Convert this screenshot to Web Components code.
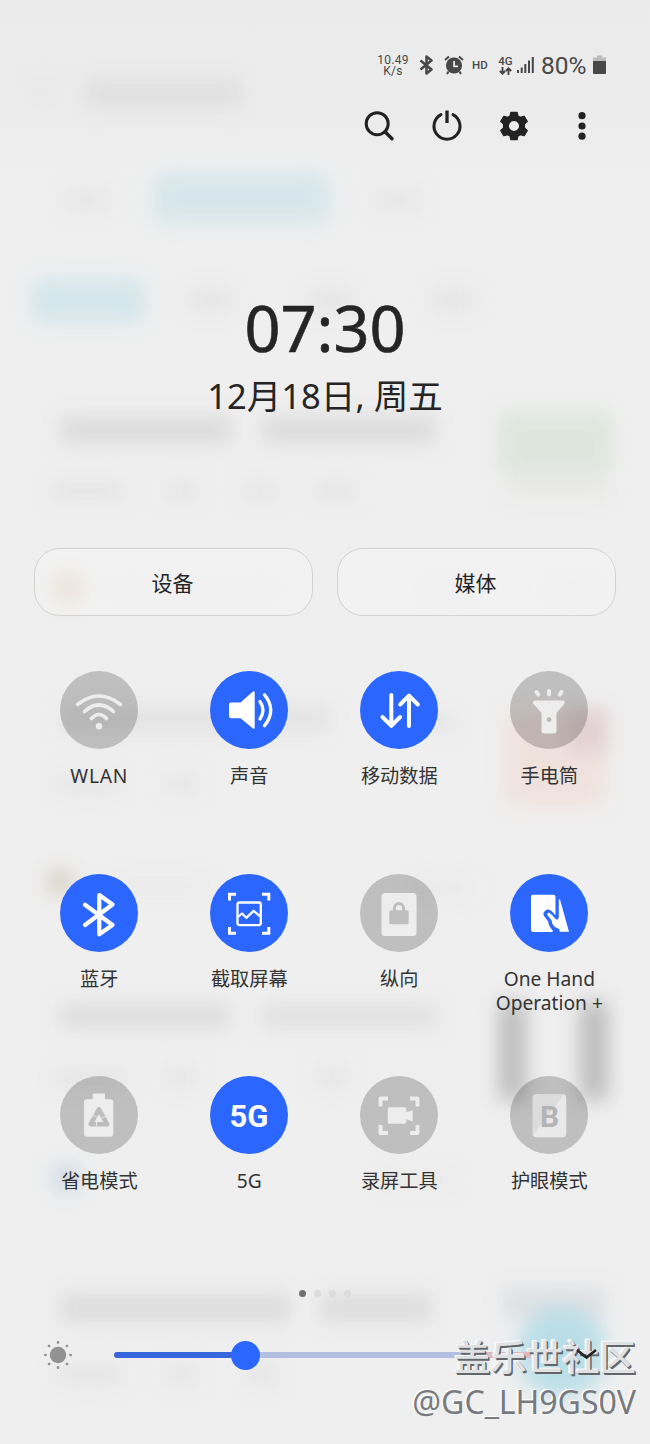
<!DOCTYPE html>
<html lang="zh-CN">
<head>
<meta charset="utf-8">
<title>Quick Panel</title>
<style>
  body {
    margin: 0;
    background: #efefef;
    color: #252525;
    font-family: "Noto Sans", "Noto Sans CJK SC", sans-serif;
  }
</style>
</head>
<body>
<quick-panel></quick-panel>

<script>
// helper: every element clones its own template into an open root
function define(name, html, setup) {
  const template = document.createElement('template');
  template.innerHTML = html;
  customElements.define(name, class extends HTMLElement {
    connectedCallback() {
      if (this.shadowRoot) return;
      this.attachShadow({ mode: 'open' }).appendChild(template.content.cloneNode(true));
      if (setup) setup(this, this.shadowRoot);
    }
  });
}

const ICONS = {
  wifi: `<g fill="none" stroke="currentColor" stroke-width="3.6" stroke-linecap="round">
    <path d="M17.5 33.5Q39 16.500 60.500 33.500M24.500 40.500Q39 27.500 53.500 40.500M31.500 47.500Q39 39.500 46.500 47.500"/></g>
    <circle cx="39" cy="55.300" r="3.300" fill="currentColor"/>`,
  sound: `<path fill="currentColor" d="M21 31.500h9.500L43 20.600q1.700-1 1.700 1v35q0 2-1.700 1L30.500 47.200H21q-2 0-2-2V33.500q0-2 2-2z"/>
    <path fill="none" stroke="currentColor" stroke-width="3.300" stroke-linecap="round" d="M50 30.500q6 8.500 0 17.500M54.500 23.800q12.500 15.500 0 31"/>`,
  data: `<path fill="none" stroke="currentColor" stroke-width="4" stroke-linecap="round" stroke-linejoin="round" d="M31.300 24v30M22.500 46l8.800 8.800 8.800-8.800M49 55V25M40.200 33.500l8.800-8.800 8.800 8.800"/>`,
  torch: `<path fill="currentColor" fill-rule="evenodd" d="M24.500 29.500h28.500q1.500 0 1.500 1.500v1.500L46.500 42v17.500q0 3-3 3h-9q-3 0-3-3V42L23 32.500V31q0-1.500 1.500-1.500zM39 46.200a2.400 2.400 0 1 0 .01 0z"/>
    <path stroke="currentColor" stroke-width="4" stroke-linecap="round" d="M26.500 21l1.800 2.600M39 20v3.500M51.500 21l-1.800 2.600"/>`,
  bluetooth: `<path fill="none" stroke="currentColor" stroke-width="4.200" stroke-linecap="round" stroke-linejoin="round" d="M25 30.700L52.500 51 39.300 60.200V21L52.500 30.500 25 51"/>`,
  capture: `<g fill="none" stroke="currentColor"><path stroke-width="3" d="M26 20.200h-6.500v6.300M52 20.200h6.800v6.300M26 59.200h-6.500v-6.300M52 59.200h6.800v-6.300"/>
    <rect x="27.500" y="28.500" width="23.300" height="22.600" rx="2" stroke-width="2.300"/>
    <path stroke-width="2.300" stroke-linejoin="round" d="M28 43l4-3.500 4.300 4.300 7.300-7 7.200 6"/></g>`,
  portrait: `<path fill="currentColor" fill-rule="evenodd" d="M25 19h28q3.500 0 3.500 3.500v36q0 3.500-3.500 3.500H25q-3.500 0-3.500-3.500v-36Q21.500 19 25 19z
    M33 36.300h-2q-1.700 0-1.700 1.700v10.700q0 1.600 1.700 1.600h16q1.700 0 1.700-1.600V38q0-1.700-1.700-1.700h-2V34a6 6 0 0 0-12 0zM36 36.300V34a3 3 0 0 1 6 0v2.300z"/>`,
  onehand: `<path fill="currentColor" d="M23 20.800h20.500q2 0 2 2v18.500l-3.500-3.800q-4-3.500-7-.5-3 2.500-.3 6l3.500 4.500q.6 5 4.500 9v1.500H23q-2 0-2-2V22.800q0-2 2-2z"/>
    <path fill="currentColor" d="M48.800 25.500q1-.8 1.500 1l8.700 31.300h-9.500v-2.500l-5-2.500q-2.500-2-3-6.500l-4-5q-1-2.500 1.500-2.500 1 0 2.500 1.600l4.800 5.200h1.500q1-1 1-3z"/>`,
  saver: `<path fill="currentColor" d="M32.700 17.500h12.300v5.800h5.300q3 0 3 3v31.500q0 3-3 3H27q-3 0-3-3V26.300q0-3 3-3h5.700z"/>
    <path fill="none" stroke="#bdbdbd" stroke-width="4.600" stroke-linejoin="round" d="M38.900 33.300L47.200 48.300H30.600z"/>
    <path stroke="#e5e5e5" stroke-width="1" d="M36.500 45.500v5.500M32 38.500l4.500 2.300M45.800 40.300l-4.200 1.700"/>`,
  fiveg: `<text x="39" y="51" text-anchor="middle" font-family="Roboto, sans-serif" font-weight="700" font-size="31" fill="currentColor">5G</text>`,
  record: `<path fill="none" stroke="currentColor" stroke-width="3.900" stroke-linejoin="round" d="M28 22.500h-7.500v8M50 22.500h7.500v8M28 57h-7.500v-8M50 57h7.500v-8"/>
    <path fill="currentColor" d="M29.500 31.300h15q1.800 0 1.800 1.800v3.200l6.400-2v11.200l-6.400-2.300v2.700q0 1.800-1.800 1.800h-15q-1.800 0-1.800-1.800V33.100q0-1.800 1.800-1.800z"/>`,
  eye: `<rect x="22.500" y="18" width="33.700" height="43.300" rx="4" fill="#dcdcdc"/>
    <path fill="#e9e9e9" d="M54 18.500q2.200 1 2.200 3.500v35.300q0 4-4 4H26.500q-2.500 0-3.500-1.800z"/>
    <text x="39.700" y="50.500" text-anchor="middle" font-family="Roboto, sans-serif" font-weight="700" font-size="30" fill="#b4b4b4">B</text>`
};

// blurred page showing through the panel
define('panel-backdrop', `
  <style>
    :host { position: absolute; inset: 0; z-index: -1; overflow: hidden; }
    svg { display: block; }
  </style>
  <svg width="650" height="1444" viewBox="0 0 650 1444">
    <defs>
      <filter id="soft" x="-100" y="-100" width="850" height="1644" filterUnits="userSpaceOnUse" color-interpolation-filters="sRGB"><feGaussianBlur stdDeviation="10"/></filter>
      <linearGradient id="shade" x2="0" y2="1"><stop offset="0" stop-color="#ebebeb"/><stop offset=".09" stop-color="#ececec"/><stop offset=".12" stop-color="#efefef"/><stop offset="1" stop-color="#efefef"/></linearGradient>
    </defs>
    <rect width="650" height="1444" fill="url(#shade)"/>
    <g filter="url(#soft)" opacity=".9">
      <rect x="86" y="80" width="155" height="28" fill="#dedede"/>
      <rect x="32" y="80" width="24" height="26" fill="#e7e7e7"/>
      <rect x="152" y="172" width="178" height="52" rx="14" fill="#d4e6ec"/>
      <rect x="62" y="189" width="48" height="22" fill="#e6e6e6"/>
      <rect x="372" y="189" width="50" height="22" fill="#e6e6e6"/>
      <rect x="30" y="278" width="116" height="46" rx="14" fill="#d2e6ec"/>
      <g fill="#e5e5e5">
        <rect x="186" y="288" width="48" height="24"/><rect x="306" y="288" width="48" height="24"/><rect x="430" y="288" width="46" height="24"/>
        <rect x="50" y="480" width="75" height="22"/><rect x="164" y="480" width="34" height="22"/><rect x="242" y="480" width="36" height="22"/><rect x="314" y="480" width="42" height="22"/>
        <rect x="110" y="580" width="170" height="18" fill="#ebebeb"/><rect x="420" y="580" width="60" height="18" fill="#e9e9e9"/><rect x="545" y="580" width="55" height="18" fill="#e9e9e9"/>
        <rect x="55" y="774" width="66" height="20"/><rect x="164" y="774" width="34" height="20"/>
        <rect x="110" y="878" width="100" height="16" fill="#e9e9e9"/><rect x="410" y="880" width="68" height="16" fill="#e9e9e9"/>
        <rect x="55" y="1068" width="72" height="20"/><rect x="164" y="1068" width="34" height="20"/><rect x="314" y="1068" width="36" height="20"/>
        <rect x="380" y="1172" width="80" height="16" fill="#e9e9e9"/>
        <rect x="55" y="1364" width="68" height="22"/><rect x="164" y="1364" width="34" height="22"/><rect x="245" y="1364" width="34" height="22"/>
      </g>
      <g fill="#dadada">
        <rect x="60" y="416" width="172" height="28"/><rect x="262" y="416" width="174" height="28"/>
        <rect x="60" y="706" width="270" height="26" fill="#e2e2e2"/><rect x="425" y="712" width="30" height="20" fill="#e4e4e4"/>
        <rect x="60" y="1003" width="170" height="26" fill="#dcdcdc"/><rect x="262" y="1003" width="174" height="26" fill="#dfdfdf"/>
        <rect x="60" y="1294" width="230" height="28"/><rect x="320" y="1294" width="112" height="28"/>
      </g>
      <rect x="498" y="412" width="114" height="58" fill="#dce5dc"/>
      <rect x="504" y="470" width="106" height="28" fill="#e8e8e6"/>
      <circle cx="68" cy="588" r="15" fill="#e4d5c6"/>
      <rect x="505" y="710" width="100" height="96" fill="#f0e1dc"/>
      <rect x="570" y="708" width="38" height="45" fill="#e2cdd0"/>
      <circle cx="60" cy="882" r="12" fill="#cfc5b8"/>
      <rect x="499" y="1002" width="27" height="98" fill="#b6b6b6"/>
      <rect x="580" y="1002" width="28" height="98" fill="#b6b6b6"/>
      <circle cx="66" cy="1178" r="16" fill="#cfdae6"/>
      <rect x="502" y="1288" width="104" height="30" fill="#dcdee1"/>
      <circle cx="562" cy="1352" r="45" fill="#b5dde8"/>
    </g>
  </svg>
`);

define('status-bar', `
  <style>
    :host { display: flex; align-items: center; justify-content: flex-end; height: 36px; margin-top: 47px; padding-right: 44px; color: #484848; font-family: Roboto, sans-serif; }
    .speed { display: grid; justify-items: center; width: 36px; font-size: 12px; line-height: 11.500px; letter-spacing: .3px; margin: 2px 8px 0 0; }
    .hd { font-size: 11.500px; font-weight: 500; margin: 0 9px 0 8px; width: 17px; }
    .net { display: grid; justify-items: center; width: 15px; margin-right: 3px; font-size: 11.500px; font-weight: 500; line-height: 11px; }
    .charge { font-size: 24.500px; line-height: 36px; width: 49px; margin: 2px 3px 0 6px; }
    svg { display: block; flex: none; }
  </style>
  <div class="speed"><span>10.49</span><span>K/s</span></div>
  <svg width="15" height="20" viewBox="0 0 15 20" fill="none" stroke="currentColor" stroke-width="2.500" stroke-linejoin="round"><path d="M1.500 5.500l11 9-5 4V1.500l5 4-11 9"/></svg>
  <svg width="20" height="20" viewBox="0 0 20 20" style="margin-left:10px"><path fill="currentColor" fill-rule="evenodd" d="M10 2.500a8 8 0 1 0 .01 0zM9.200 6h1.800v4.500h3v1.700H9.200z"/><path stroke="currentColor" stroke-width="2" d="M1 5l4-3.500M19 5l-4-3.500M4.500 16.500L3 19M15.500 16.500L17 19"/></svg>
  <span class="hd">HD</span>
  <div class="net">4G<svg width="13" height="8" viewBox="0 0 13 8" fill="none" stroke="currentColor" stroke-width="1.900"><path d="M3.500 0v6.500M.8 4l2.700 2.700L6.200 4M9.500 8V1.500M6.800 4l2.700-2.700L12.200 4"/></svg></div>
  <svg width="19" height="18" viewBox="0 0 19 18" fill="currentColor"><path d="M1 14h2v3H1zM4.700 11.500h2V17h-2zM8.300 8h2v9h-2zM12 4.500h2V17h-2zM15.800 1h2v16h-2z"/></svg>
  <span class="charge">80%</span>
  <svg width="13" height="20" viewBox="0 0 13 20"><path fill="#bbb" d="M4 .5h5v2h4V7H0V2.500h4z"/><path fill="currentColor" d="M0 6h13v12q0 1-1 1H1q-1 0-1-1z"/></svg>
`);

define('panel-toolbar', `
  <style>
    :host { display: flex; align-items: center; justify-content: flex-end; gap: 35.600px; height: 86px; padding-right: 52px; color: #222; }
    svg { display: block; }
  </style>
  <svg width="32" height="32" viewBox="0 0 32 32" fill="none" stroke="currentColor" stroke-width="3"><circle cx="14.200" cy="13.700" r="11"/><path stroke-width="3.400" stroke-linecap="round" d="M22 21.700l7 7"/></svg>
  <svg width="32" height="32" viewBox="0 0 32 32" fill="none" stroke="currentColor" stroke-width="3" stroke-linecap="round"><path d="M10 4.600a13 13 0 1 0 12 0"/><path stroke-width="3.300" stroke-linecap="butt" d="M16 .5v12.500"/></svg>
  <svg width="32" height="32" viewBox="0 0 32 32"><path fill="currentColor" fill-rule="evenodd" stroke="currentColor" stroke-width="1.500" stroke-linejoin="round" d="M13 2.500h6l.9 3.600 2.400 1.400 3.800-1.100 3 5-2.800 2.600v4l2.800 2.600-3 5-3.800-1.100-2.400 1.400-.9 3.600h-6l-.9-3.600-2.400-1.400-3.800 1.100-3-5 2.800-2.600v-4l-2.800-2.600 3-5 3.800 1.100 2.400-1.400zM16 10.300a5.700 5.700 0 1 0 .01 0z"/></svg>
  <svg width="32" height="32" viewBox="0 0 32 32" fill="currentColor"><circle cx="16" cy="5.700" r="3.600"/><circle cx="16" cy="16" r="3.600"/><circle cx="16" cy="26.200" r="3.600"/></svg>
`);

define('panel-clock', `
  <style>
    :host { display: block; margin-top: 119px; text-align: center; color: #252525; }
    .time { font-size: 63px; line-height: 80px; -webkit-text-stroke: .6px #252525; }
    .date { font-size: 34.600px; line-height: 50px; margin-top: 3px; }
  </style>
  <div class="time"><slot name="time"></slot></div>
  <div class="date"><slot name="date"></slot></div>
`);

define('pill-button', `
  <style>
    :host { box-sizing: border-box; display: flex; align-items: center; justify-content: center; height: 68px; padding-right: 2px; border: 1px solid #d3d3d3; border-radius: 26px; background: rgba(255, 255, 255, .22); font-size: 21px; }
  </style>
  <slot></slot>
`);

define('quick-tile', `
  <style>
    :host { display: flex; flex-direction: column; align-items: center; color: #333; }
    .disc { width: 78px; height: 78px; border-radius: 50%; background: rgba(0, 0, 0, .2); color: #ededed; }
    :host([on]) .disc { background: #2b66ff; color: #fff; }
    :host([icon="wifi"]) .label { letter-spacing: .8px; }
    svg { display: block; }
    .label { margin-top: 15px; width: 130px; text-align: center; font-size: 19.200px; line-height: 24px; }
  </style>
  <div class="disc"><svg width="78" height="78" viewBox="0 0 78 78"></svg></div>
  <div class="label"><slot></slot></div>
`, (host, root) => {
  root.querySelector('svg').innerHTML = ICONS[host.getAttribute('icon')];
});

define('page-dots', `
  <style>
    :host { display: flex; justify-content: center; gap: 8px; height: 7px; }
    i { width: 7px; height: 7px; border-radius: 50%; background: #dcdcdc; }
    i:first-of-type { background: #707070; }
  </style>
  <i></i><i></i><i></i><i></i>
`);

define('brightness-slider', `
  <style>
    :host { display: flex; align-items: center; height: 30px; padding: 0 51px 0 43px; }
    svg { display: block; flex: none; }
    .track { display: flex; align-items: center; width: 417px; height: 6px; margin-left: 41px; border-radius: 3px;
      background: linear-gradient(90deg, #3765dc 0 132px, #b2bfe3 132px 350px, #dfb9c2 375px); }
    .knob { width: 29px; height: 29px; margin-left: 117px; border-radius: 50%; background: #2b66ff; }
    /* the arrow stays readable over the corner mark */
    .more { position: relative; z-index: 1; margin-left: auto; }
  </style>
  <svg width="30" height="30" viewBox="0 0 30 30" fill="#929292"><circle cx="15" cy="15" r="8.200"/>
    <g stroke="#929292" stroke-width="2.600" stroke-linecap="round"><path d="M15 2.300v.3M15 27.400v.3M2.300 15h.3M27.400 15h.3M6 6l.2.200M23.800 23.800l.2.200M6 24l.2-.2M23.800 6.200l.2-.2"/></g></svg>
  <div class="track"><div class="knob"></div></div>
  <svg class="more" width="26" height="16" viewBox="0 0 26 16" fill="none" stroke="#222" stroke-width="2.600"><path d="M4 3l9.500 7.500L23 3"/></svg>
`);

define('corner-mark', `
  <style>
    :host { position: absolute; right: 14px; top: 1328px; display: grid; justify-items: end; white-space: nowrap; }
    .site { font: 500 36.400px/54px "Noto Sans CJK SC", sans-serif; color: #dfe1e2; text-shadow: 1px 1px 0 #63666a, 1.500px 2px 0 #63666a, -1px -1px 0 #f8f8f8, -2px -1px 0 #f8f8f8; }
    .user { margin-top: -3px; font: 400 32px/46px "Noto Sans", sans-serif; color: #777a7e; text-shadow: -1.500px -1px 0 #fff; }
  </style>
  <div class="site"><slot name="site"></slot></div>
  <div class="user"><slot name="user"></slot></div>
`);

define('quick-panel', `
  <style>
    :host { position: relative; z-index: 0; display: flex; flex-direction: column; width: 650px; height: 1444px; overflow: hidden; }
    .pills { display: grid; grid-template-columns: 1fr 1fr; gap: 24px; padding: 0 34px; margin-top: 127px; }
    .tiles { display: grid; grid-template-columns: repeat(4, 150px); grid-auto-rows: 202.600px; justify-content: center; margin: 55px 1.400px 0 0; }
    page-dots { margin-top: 11px; }
    brightness-slider { margin-top: 43.500px; }
  </style>
  <panel-backdrop></panel-backdrop>
  <status-bar></status-bar>
  <panel-toolbar></panel-toolbar>
  <panel-clock><span slot="time">07:30</span><span slot="date">12月18日, 周五</span></panel-clock>
  <div class="pills"><pill-button>设备</pill-button><pill-button>媒体</pill-button></div>
  <div class="tiles">
    <quick-tile icon="wifi">WLAN</quick-tile>
    <quick-tile icon="sound" on>声音</quick-tile>
    <quick-tile icon="data" on>移动数据</quick-tile>
    <quick-tile icon="torch">手电筒</quick-tile>
    <quick-tile icon="bluetooth" on>蓝牙</quick-tile>
    <quick-tile icon="capture" on>截取屏幕</quick-tile>
    <quick-tile icon="portrait">纵向</quick-tile>
    <quick-tile icon="onehand" on>One Hand Operation +</quick-tile>
    <quick-tile icon="saver">省电模式</quick-tile>
    <quick-tile icon="fiveg" on>5G</quick-tile>
    <quick-tile icon="record">录屏工具</quick-tile>
    <quick-tile icon="eye">护眼模式</quick-tile>
  </div>
  <page-dots></page-dots>
  <brightness-slider></brightness-slider>
  <corner-mark><span slot="site">盖乐世社区</span><span slot="user">@GC_LH9GS0V</span></corner-mark>
`);
</script>
</body>
</html>
